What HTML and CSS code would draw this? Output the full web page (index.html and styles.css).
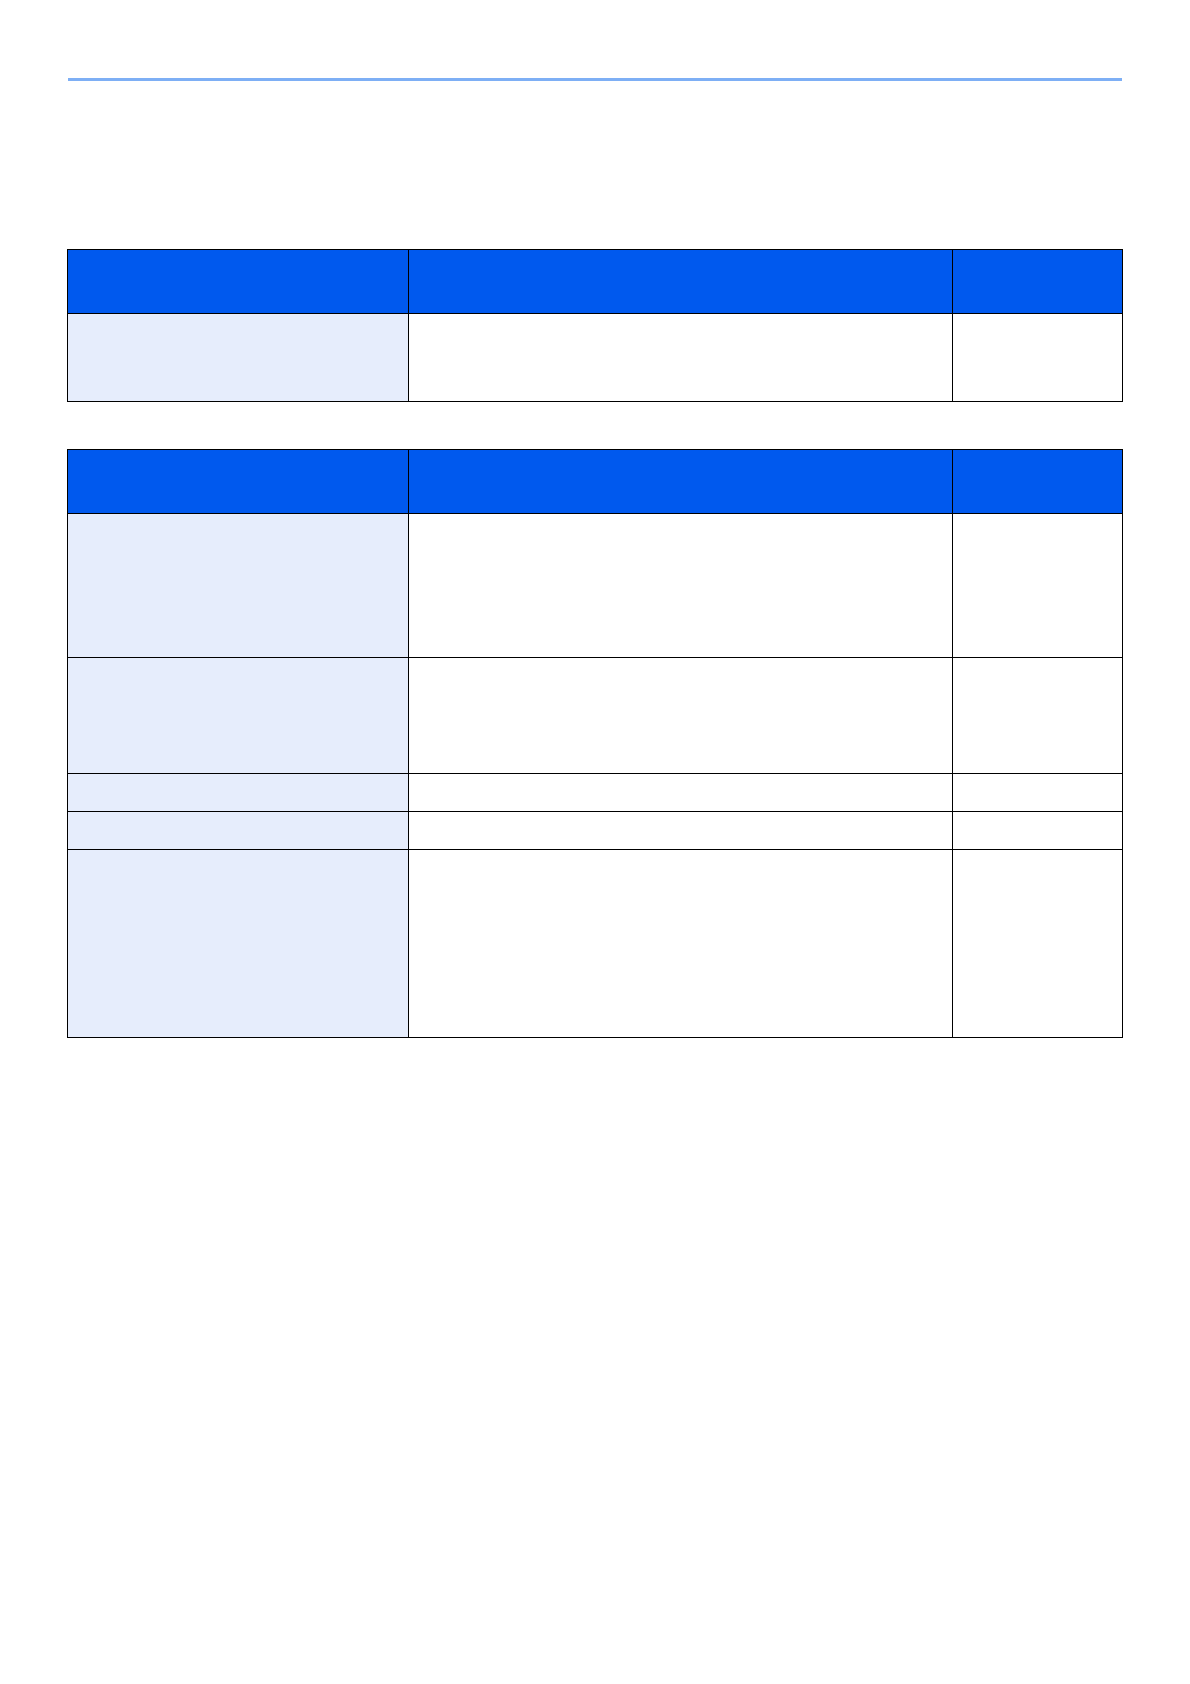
FILE: index.html
```html
<!DOCTYPE html>
<html lang="en">
<head>
<meta charset="utf-8">
<title>Tables</title>
<link rel="stylesheet" href="styles.css">
</head>
<body>
<div class="page">
  <div class="rule"></div>

  <div class="grid first">
    <div class="cell head h-head"></div>
    <div class="cell head h-head"></div>
    <div class="cell head h-head"></div>

    <div class="cell label h-88"></div>
    <div class="cell h-88"></div>
    <div class="cell h-88"></div>
  </div>

  <div class="grid second">
    <div class="cell head h-head"></div>
    <div class="cell head h-head"></div>
    <div class="cell head h-head"></div>

    <div class="cell label h-144"></div>
    <div class="cell h-144"></div>
    <div class="cell h-144"></div>

    <div class="cell label h-116"></div>
    <div class="cell h-116"></div>
    <div class="cell h-116"></div>

    <div class="cell label h-38"></div>
    <div class="cell h-38"></div>
    <div class="cell h-38"></div>

    <div class="cell label h-38"></div>
    <div class="cell h-38"></div>
    <div class="cell h-38"></div>

    <div class="cell label h-188"></div>
    <div class="cell h-188"></div>
    <div class="cell h-188"></div>
  </div>
</div>
</body>
</html>
```

FILE: styles.css
```css
html, body {
  margin: 0;
  padding: 0;
  background: #ffffff;
  font-family: "Liberation Sans", Arial, sans-serif;
}

.page {
  width: 1190px;
  box-sizing: border-box;
  padding: 78px 67px 0 67px;
}

.rule {
  height: 3px;
  margin: 0 1px;
  background: #7eaff5;
}

.grid {
  display: grid;
  grid-template-columns: 341px 544px 170px;
  border-top: 1px solid #000;
  border-left: 1px solid #000;
  width: 1055px;
}

.first {
  margin-top: 168px;
}

.second {
  margin-top: 47px;
}

.cell {
  box-sizing: border-box;
  border-right: 1px solid #000;
  border-bottom: 1px solid #000;
  background: #ffffff;
}

.head {
  background: #0059ee;
}

.label {
  background: #e6edfc;
}

.h-head { height: 64px; }
.h-88 { height: 88px; }
.h-144 { height: 144px; }
.h-116 { height: 116px; }
.h-38 { height: 38px; }
.h-188 { height: 188px; }
```
